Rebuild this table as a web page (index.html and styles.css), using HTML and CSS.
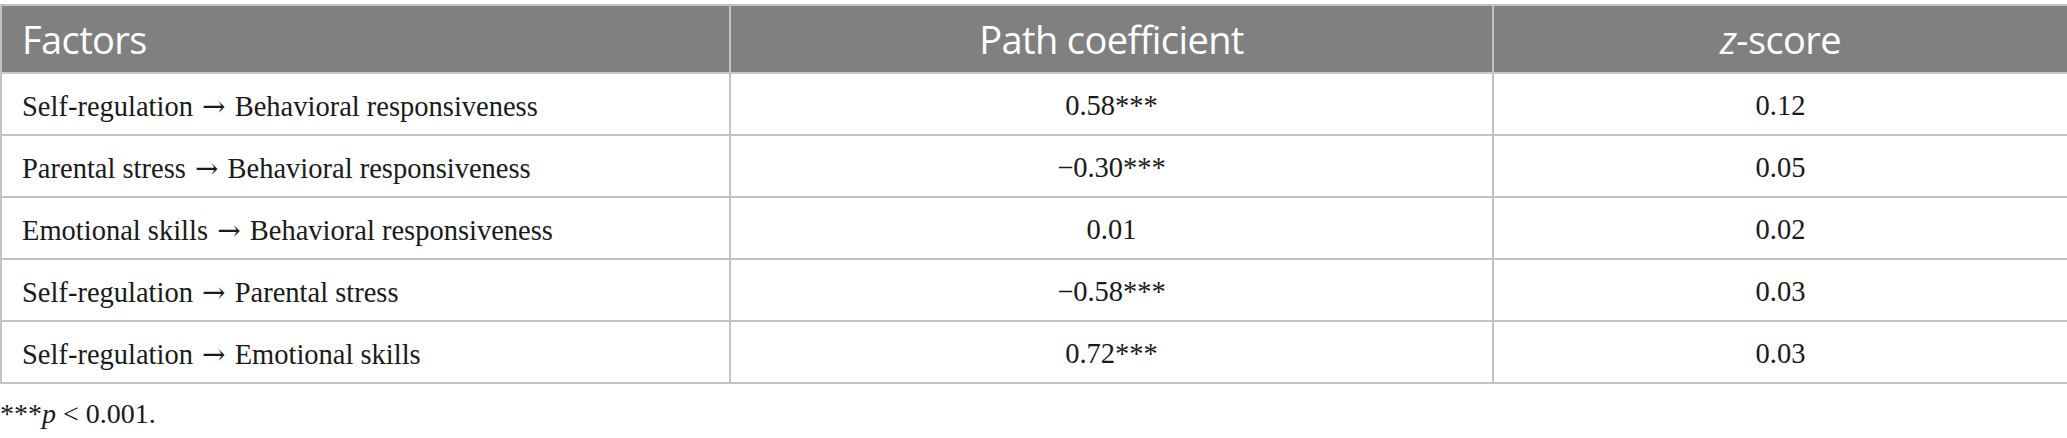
FILE: index.html
```html
<!DOCTYPE html>
<html lang="en">
<head>
<meta charset="utf-8">
<title>Path coefficients</title>
<link rel="stylesheet" href="styles.css">
</head>
<body>
<div class="wrap">
  <table class="data">
    <colgroup>
      <col class="c1">
      <col class="c2">
      <col class="c3">
    </colgroup>
    <thead>
      <tr>
        <th class="left">Factors</th>
        <th>Path coefficient</th>
        <th><em>z</em>-score</th>
      </tr>
    </thead>
    <tbody>
      <tr><td class="left">Self-regulation <span class="arr">→</span> Behavioral responsiveness</td><td>0.58***</td><td>0.12</td></tr>
      <tr><td class="left">Parental stress <span class="arr">→</span> Behavioral responsiveness</td><td>−0.30***</td><td>0.05</td></tr>
      <tr><td class="left">Emotional skills <span class="arr">→</span> Behavioral responsiveness</td><td>0.01</td><td>0.02</td></tr>
      <tr><td class="left">Self-regulation <span class="arr">→</span> Parental stress</td><td>−0.58***</td><td>0.03</td></tr>
      <tr><td class="left">Self-regulation <span class="arr">→</span> Emotional skills</td><td>0.72***</td><td>0.03</td></tr>
    </tbody>
  </table>
  <p class="note">***<em>p</em> &lt; 0.001.</p>
</div>
</body>
</html>
```

FILE: styles.css
```css
html, body {
  margin: 0;
  padding: 0;
  background: #ffffff;
}
.wrap {
  padding-top: 4px;
}
.data {
  width: 2067px;
  border-collapse: collapse;
  table-layout: fixed;
}
.c1 { width: 729px; }
.c2 { width: 763px; }
.c3 { width: 575px; }
.data th {
  background: #7f807f;
  color: #ffffff;
  font-family: "Open Sans", "Noto Sans", sans-serif;
  font-weight: 400;
  font-size: 38px;
  letter-spacing: -0.6px;
  height: 66px;
  padding: 0 20px;
  text-align: center;
  border: 2px solid #c2c2c2;
  border-bottom-color: #c8c8c8;
}
.data th em {
  font-style: italic;
}
.data td {
  font-family: "Liberation Serif", "Times New Roman", serif;
  font-size: 28.5px;
  color: #1a1a1a;
  height: 56px;
  padding: 4px 20px 0;
  text-align: center;
  border: 2px solid #c2c2c2;
}
.arr {
  font-family: "DejaVu Serif", serif;
  font-size: 28px;
  margin: 0 2px;
}
.data th.left,
.data td.left {
  text-align: left;
}
.note {
  margin: 14px 0 0 0;
  font-family: "Liberation Serif", "Times New Roman", serif;
  font-size: 28px;
  color: #1a1a1a;
  line-height: 32px;
}
```
